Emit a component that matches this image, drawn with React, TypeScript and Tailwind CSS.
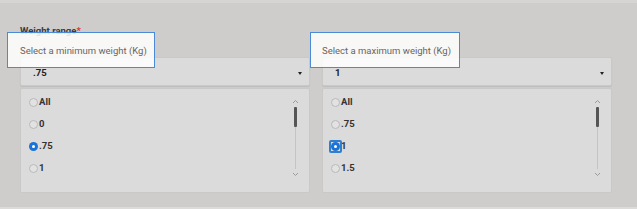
import React from "react";

type Opt = { label: string; checked?: boolean; focus?: boolean };

function Radio({ checked, focus }: { checked?: boolean; focus?: boolean }) {
  if (checked) {
    return (
      <span className="relative flex h-[9px] w-[9px] items-center justify-center">
        {focus && (
          <span className="absolute -inset-[2px] rounded-[2px] border-[2px] border-[#2f7fd1]" />
        )}
        <span className="flex h-[9px] w-[9px] items-center justify-center rounded-full bg-[#1a73d9]">
          <span className="h-[3px] w-[3px] rounded-full bg-white" />
        </span>
      </span>
    );
  }
  return <span className="h-[9px] w-[9px] rounded-full border border-[#b9b9b9] bg-[#e2e2e2]" />;
}

function Scrollbar() {
  return (
    <div className="flex w-[8px] flex-col items-center pt-[10px]">
      <svg width="7" height="5" viewBox="0 0 7 5">
        <path d="M1 4 L3.5 1.5 L6 4" fill="none" stroke="#9a9a9a" strokeWidth="1" />
      </svg>
      <div className="relative mt-[3px] flex h-[62px] w-[3px] justify-center">
        <div className="h-full w-px bg-[#c4c4c4]" />
        <div className="absolute top-0 h-[20px] w-[3px] rounded-[1px] bg-[#555]" />
      </div>
      <svg className="mt-[3px]" width="7" height="5" viewBox="0 0 7 5">
        <path d="M1 1 L3.5 3.5 L6 1" fill="none" stroke="#9a9a9a" strokeWidth="1" />
      </svg>
    </div>
  );
}

function WeightColumn({ value, options }: { value: string; options: Opt[] }) {
  return (
    <div className="flex w-[290px] flex-col gap-[2px]">
      <div className="flex h-[29px] items-center justify-between rounded-[2px] border border-[#c9c9c9] bg-[#dbdbdb] pl-[12px] pr-[7px] pt-[4px] shadow-[0_1px_1px_rgba(0,0,0,0.08)]">
        <span className="text-[9.5px] font-bold text-[#222]">{value}</span>
        <span className="h-0 w-0 border-x-[2px] border-t-[3px] border-x-transparent border-t-[#222]" />
      </div>
      <div className="flex h-[105px] justify-between rounded-[2px] border border-[#c9c9c9] bg-[#dbdbdb] pl-[8px] pr-[10px]">
        <ul className="flex flex-col gap-[13px] pt-[9px]">
          {options.map((o) => (
            <li key={o.label} className="flex h-[9px] items-center gap-[1px] text-[9.5px] font-bold text-[#333]">
              <Radio checked={o.checked} focus={o.focus} />
              <span>{o.label}</span>
            </li>
          ))}
        </ul>
        <Scrollbar />
      </div>
    </div>
  );
}

export default function App() {
  return (
    <div className="relative h-[209px] w-[637px] overflow-hidden bg-[#cecdcb] font-['Roboto','Liberation_Sans',sans-serif]">
      <div className="h-[3px] bg-[#d6d5d3]" />
      <div className="pl-[20px] pt-[22px]">
        <div className="mb-[20px] text-[9.5px] font-bold leading-[12px] text-[#3a3a3a]">
          Weight range<span className="text-[#d33]">*</span>
        </div>
        <div className="flex gap-[12px]">
          <WeightColumn
            value=".75"
            options={[
              { label: "All" },
              { label: "0" },
              { label: ".75", checked: true },
              { label: "1" },
            ]}
          />
          <WeightColumn
            value="1"
            options={[
              { label: "All" },
              { label: ".75" },
              { label: "1", checked: true, focus: true },
              { label: "1.5" },
            ]}
          />
        </div>
      </div>
      <div className="absolute bottom-0 left-0 right-0 h-[2px] bg-[#dcdbd9]" />

      {/* callouts over the selects */}
      <div className="absolute left-[7px] top-[32px] flex h-[36px] w-[148px] items-start border-[1.5px] border-[#4a8ad6] bg-white/85 pl-[12px] pt-[11px] text-[9.5px] text-[#666]">
        Select a minimum weight (Kg)
      </div>
      <div className="absolute left-[310px] top-[32px] flex h-[36px] w-[150px] items-start border-[1.5px] border-[#4a8ad6] bg-white/85 pl-[11px] pt-[11px] text-[9.5px] text-[#666]">
        Select a maximum weight (Kg)
      </div>
    </div>
  );
}
